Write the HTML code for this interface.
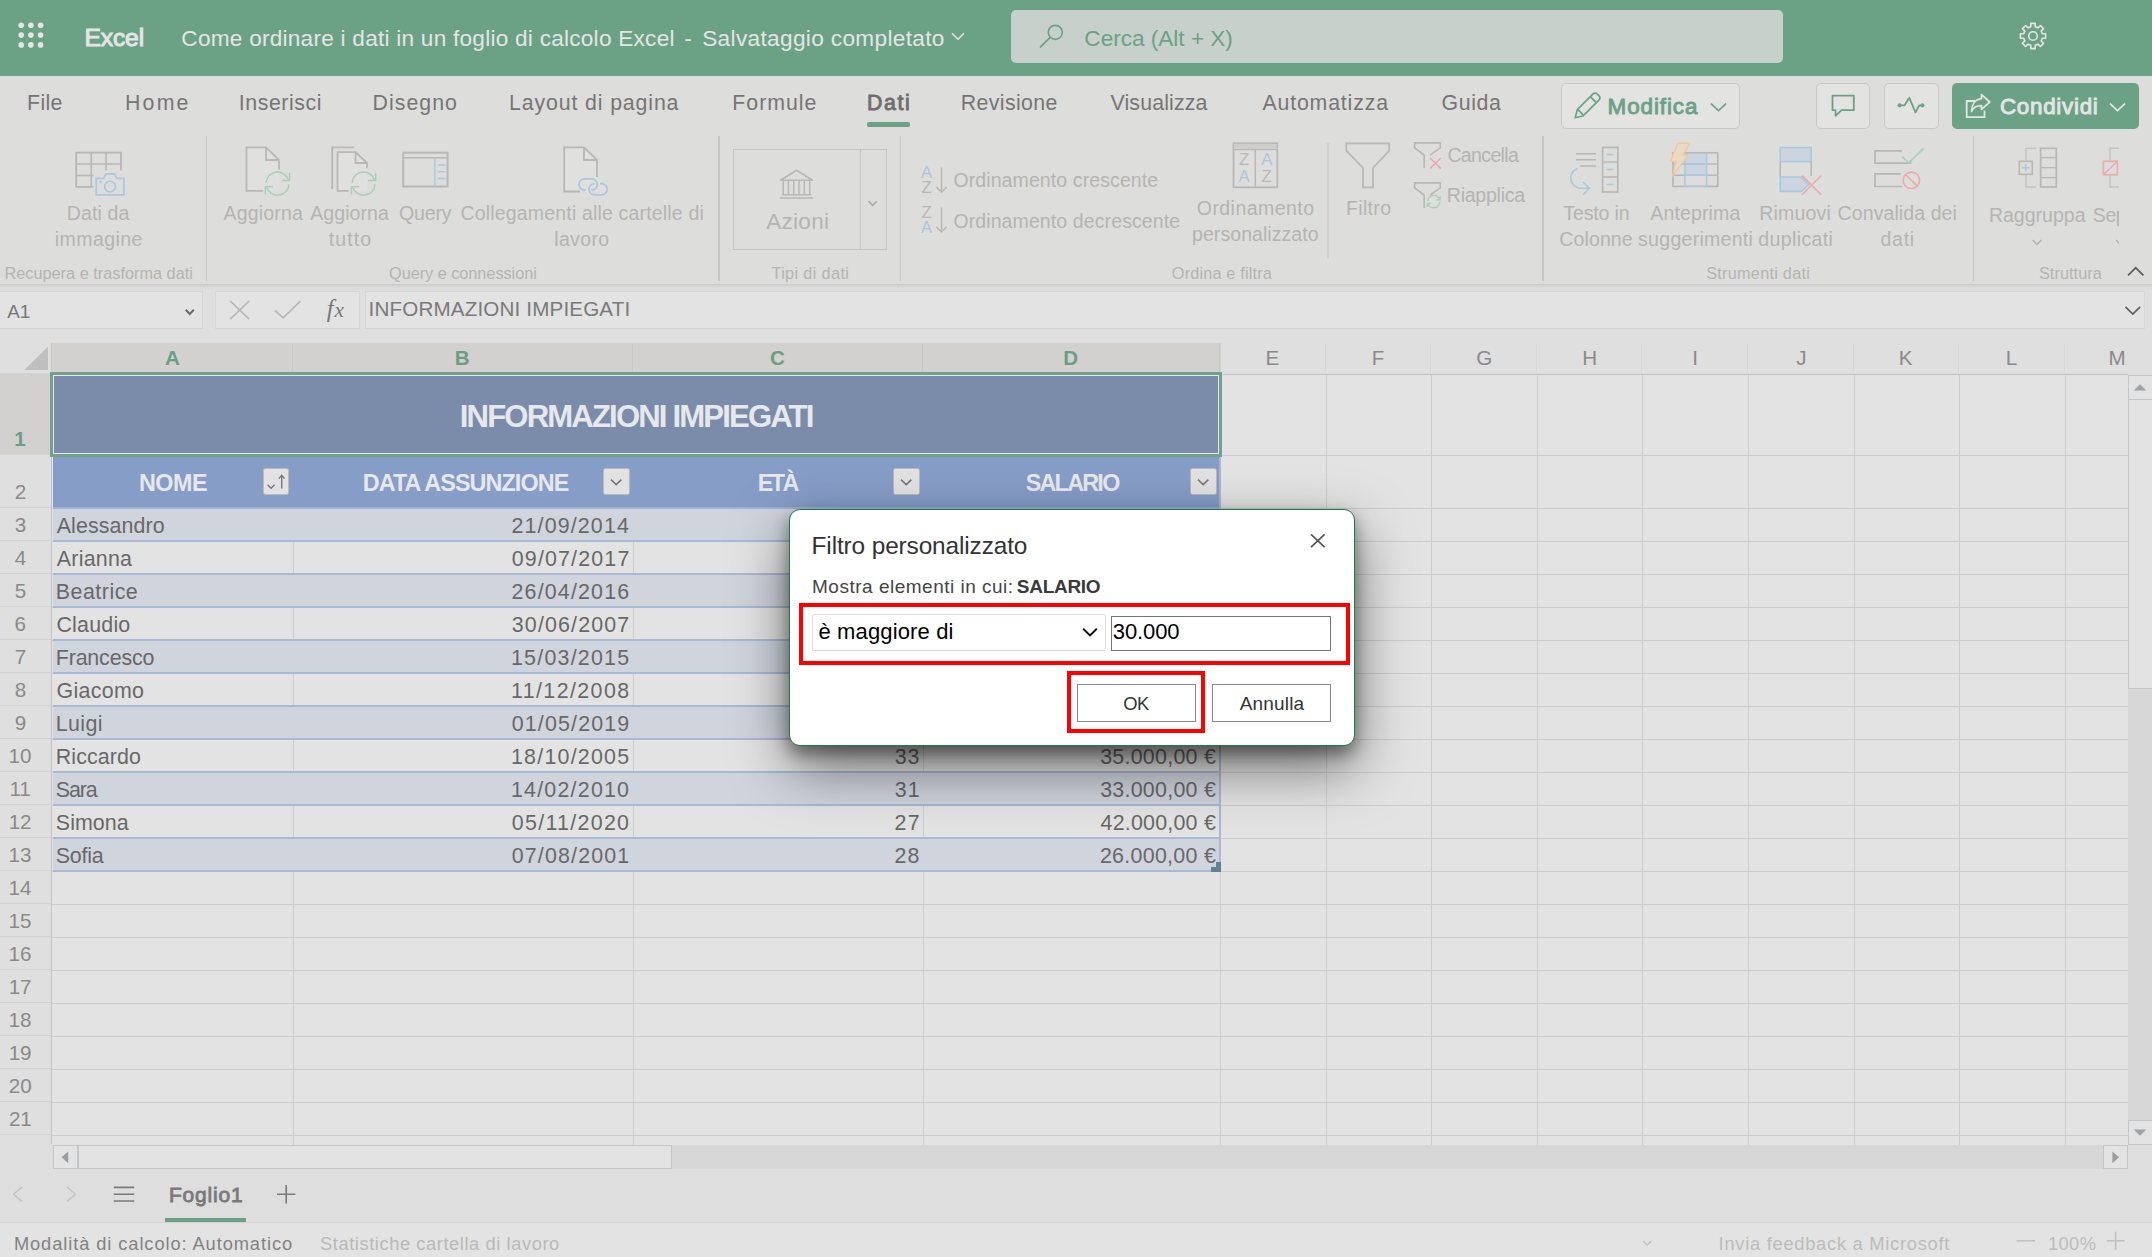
<!DOCTYPE html>
<html lang="it"><head><meta charset="utf-8"><title>Excel</title>
<style>
html,body{margin:0;padding:0;background:#dddddb;}
body{width:2152px;height:1257px;position:relative;overflow:hidden;font-family:"Liberation Sans",sans-serif;}
#base,#dlg{position:absolute;left:0;top:0;width:2152px;height:1257px;overflow:hidden;}
#base>div,#base>span,#dlg>div,#dlg>span{position:absolute;box-sizing:border-box;}
span{white-space:pre;font-kerning:none;font-variant-ligatures:none;}
svg{position:absolute;left:0;top:0;}
</style></head><body>
<div id="base">
<div style="left:0px;top:0px;width:2152px;height:75.5px;background:#6ba286;"></div>
<div style="left:1011px;top:10px;width:772px;height:52.5px;background:#c7d0ca;border-radius:5px;"></div>
<div style="left:0px;top:75.5px;width:2152px;height:209px;background:#dddddb;"></div>
<div style="left:867px;top:122.2px;width:43px;height:4.6px;background:#6ba286;border-radius:2px;"></div>
<div style="left:1560.5px;top:83.3px;width:179.2px;height:45.3px;background:#e3e3e2;border:1.3px solid #c9c8c7;border-radius:5px;"></div>
<div style="left:1816.4px;top:83.3px;width:54.1px;height:45.3px;background:#e3e3e2;border:1.3px solid #c9c8c7;border-radius:5px;"></div>
<div style="left:1884.1px;top:83.3px;width:54.6px;height:45.3px;background:#e3e3e2;border:1.3px solid #c9c8c7;border-radius:5px;"></div>
<div style="left:1952.1px;top:83.3px;width:186.9px;height:45.3px;background:#6ba286;border-radius:5px;"></div>
<div style="left:205.6px;top:136px;width:1.8px;height:144.5px;background:#c6c5c4;"></div>
<div style="left:718.1px;top:136px;width:1.8px;height:144.5px;background:#c6c5c4;"></div>
<div style="left:899.6px;top:136px;width:1.8px;height:144.5px;background:#c6c5c4;"></div>
<div style="left:1542.1px;top:136px;width:1.8px;height:144.5px;background:#c6c5c4;"></div>
<div style="left:1972.5px;top:136px;width:1.8px;height:144.5px;background:#c6c5c4;"></div>
<div style="left:1327.3px;top:142.5px;width:1.3px;height:115px;background:#d0cfce;"></div>

<div style="left:733.2px;top:149.3px;width:153.6px;height:101.2px;background:transparent;border:1.3px solid #c6c5c4;"></div>
<div style="left:860px;top:150px;width:1.2px;height:100px;background:#c6c5c4;"></div>
<div style="left:0px;top:283.8px;width:2152px;height:7px;background:linear-gradient(#c9c9c9,#dbdbdb 45%,#dfdfdf);"></div>
<div style="left:0px;top:290.5px;width:2152px;height:53px;background:#dfdfdf;"></div>
<div style="left:-2px;top:291px;width:205px;height:38px;background:#e3e3e3;border:1px solid #d5d6d8;"></div>
<div style="left:215px;top:291px;width:145px;height:38px;background:#e3e3e3;border:1px solid #d5d6d8;"></div>
<div style="left:365px;top:291px;width:1780px;height:38px;background:#e3e3e3;border:1px solid #d5d6d8;"></div>
<div style="left:0px;top:343px;width:2128px;height:802px;background:#e3e3e3;"></div>
<div style="left:0px;top:343px;width:2128px;height:31px;background:#dfdfdf;"></div>
<div style="left:52px;top:343px;width:1169px;height:31px;background:#d2d1cf;"></div>
<div style="left:0px;top:374px;width:51px;height:771px;background:#dfdfdf;"></div>
<div style="left:0px;top:373px;width:51px;height:82px;background:#d2d1cf;"></div>
<div style="left:52px;top:374px;width:2076px;height:1px;background:#c3c3c3;"></div>
<div style="left:51px;top:343px;width:1px;height:802px;background:#c4c4c4;"></div>
<div style="left:292px;top:344px;width:1px;height:30px;background:#c8c7c5;"></div>
<div style="left:632px;top:344px;width:1px;height:30px;background:#c8c7c5;"></div>
<div style="left:922px;top:344px;width:1px;height:30px;background:#c8c7c5;"></div>
<div style="left:1219px;top:344px;width:1px;height:30px;background:#c8c7c5;"></div>
<div style="left:1325px;top:344px;width:1px;height:30px;background:#d5d5d5;"></div>
<div style="left:1430px;top:344px;width:1px;height:30px;background:#d5d5d5;"></div>
<div style="left:1536px;top:344px;width:1px;height:30px;background:#d5d5d5;"></div>
<div style="left:1641px;top:344px;width:1px;height:30px;background:#d5d5d5;"></div>
<div style="left:1747px;top:344px;width:1px;height:30px;background:#d5d5d5;"></div>
<div style="left:1853px;top:344px;width:1px;height:30px;background:#d5d5d5;"></div>
<div style="left:1958px;top:344px;width:1px;height:30px;background:#d5d5d5;"></div>
<div style="left:2064px;top:344px;width:1px;height:30px;background:#d5d5d5;"></div>
<div style="left:0px;top:454px;width:51px;height:1px;background:#d2d2d2;"></div>
<div style="left:0px;top:507px;width:51px;height:1px;background:#d2d2d2;"></div>
<div style="left:0px;top:540px;width:51px;height:1px;background:#d2d2d2;"></div>
<div style="left:0px;top:573px;width:51px;height:1px;background:#d2d2d2;"></div>
<div style="left:0px;top:606px;width:51px;height:1px;background:#d2d2d2;"></div>
<div style="left:0px;top:639px;width:51px;height:1px;background:#d2d2d2;"></div>
<div style="left:0px;top:672px;width:51px;height:1px;background:#d2d2d2;"></div>
<div style="left:0px;top:705px;width:51px;height:1px;background:#d2d2d2;"></div>
<div style="left:0px;top:738px;width:51px;height:1px;background:#d2d2d2;"></div>
<div style="left:0px;top:771px;width:51px;height:1px;background:#d2d2d2;"></div>
<div style="left:0px;top:804px;width:51px;height:1px;background:#d2d2d2;"></div>
<div style="left:0px;top:837px;width:51px;height:1px;background:#d2d2d2;"></div>
<div style="left:0px;top:870px;width:51px;height:1px;background:#d2d2d2;"></div>
<div style="left:0px;top:903px;width:51px;height:1px;background:#d2d2d2;"></div>
<div style="left:0px;top:936px;width:51px;height:1px;background:#d2d2d2;"></div>
<div style="left:0px;top:969px;width:51px;height:1px;background:#d2d2d2;"></div>
<div style="left:0px;top:1002px;width:51px;height:1px;background:#d2d2d2;"></div>
<div style="left:0px;top:1035px;width:51px;height:1px;background:#d2d2d2;"></div>
<div style="left:0px;top:1068px;width:51px;height:1px;background:#d2d2d2;"></div>
<div style="left:0px;top:1101px;width:51px;height:1px;background:#d2d2d2;"></div>
<div style="left:0px;top:1134px;width:51px;height:1px;background:#d2d2d2;"></div>
<div style="left:0px;top:1167px;width:51px;height:1px;background:#d2d2d2;"></div>
<div style="left:293px;top:375px;width:1px;height:770px;background:#cdcdcd;"></div>
<div style="left:633px;top:375px;width:1px;height:770px;background:#cdcdcd;"></div>
<div style="left:923px;top:375px;width:1px;height:770px;background:#cdcdcd;"></div>
<div style="left:1220px;top:375px;width:1px;height:770px;background:#cdcdcd;"></div>
<div style="left:1326px;top:375px;width:1px;height:770px;background:#cdcdcd;"></div>
<div style="left:1431px;top:375px;width:1px;height:770px;background:#cdcdcd;"></div>
<div style="left:1537px;top:375px;width:1px;height:770px;background:#cdcdcd;"></div>
<div style="left:1642px;top:375px;width:1px;height:770px;background:#cdcdcd;"></div>
<div style="left:1748px;top:375px;width:1px;height:770px;background:#cdcdcd;"></div>
<div style="left:1854px;top:375px;width:1px;height:770px;background:#cdcdcd;"></div>
<div style="left:1959px;top:375px;width:1px;height:770px;background:#cdcdcd;"></div>
<div style="left:2065px;top:375px;width:1px;height:770px;background:#cdcdcd;"></div>
<div style="left:52px;top:455px;width:2076px;height:1px;background:#cdcdcd;"></div>
<div style="left:52px;top:508px;width:2076px;height:1px;background:#cdcdcd;"></div>
<div style="left:52px;top:541px;width:2076px;height:1px;background:#cdcdcd;"></div>
<div style="left:52px;top:574px;width:2076px;height:1px;background:#cdcdcd;"></div>
<div style="left:52px;top:607px;width:2076px;height:1px;background:#cdcdcd;"></div>
<div style="left:52px;top:640px;width:2076px;height:1px;background:#cdcdcd;"></div>
<div style="left:52px;top:673px;width:2076px;height:1px;background:#cdcdcd;"></div>
<div style="left:52px;top:706px;width:2076px;height:1px;background:#cdcdcd;"></div>
<div style="left:52px;top:739px;width:2076px;height:1px;background:#cdcdcd;"></div>
<div style="left:52px;top:772px;width:2076px;height:1px;background:#cdcdcd;"></div>
<div style="left:52px;top:805px;width:2076px;height:1px;background:#cdcdcd;"></div>
<div style="left:52px;top:838px;width:2076px;height:1px;background:#cdcdcd;"></div>
<div style="left:52px;top:871px;width:2076px;height:1px;background:#cdcdcd;"></div>
<div style="left:52px;top:904px;width:2076px;height:1px;background:#cdcdcd;"></div>
<div style="left:52px;top:937px;width:2076px;height:1px;background:#cdcdcd;"></div>
<div style="left:52px;top:970px;width:2076px;height:1px;background:#cdcdcd;"></div>
<div style="left:52px;top:1003px;width:2076px;height:1px;background:#cdcdcd;"></div>
<div style="left:52px;top:1036px;width:2076px;height:1px;background:#cdcdcd;"></div>
<div style="left:52px;top:1069px;width:2076px;height:1px;background:#cdcdcd;"></div>
<div style="left:52px;top:1102px;width:2076px;height:1px;background:#cdcdcd;"></div>
<div style="left:52px;top:1135px;width:2076px;height:1px;background:#cdcdcd;"></div>
<div style="left:52px;top:1168px;width:2076px;height:1px;background:#cdcdcd;"></div>
<div style="left:53px;top:375.3px;width:1166.8px;height:78px;background:#7b8cab;"></div>
<div style="left:53px;top:457px;width:1166px;height:50.5px;background:#869dc8;"></div>
<div style="left:1219px;top:457px;width:2px;height:50.5px;background:#a9b7d4;"></div>
<div style="left:262.8px;top:468.3px;width:26.6px;height:26.8px;background:#e2e2e2;border:1.2px solid #b9b9b9;border-radius:2.5px;"></div>
<div style="left:603px;top:468.3px;width:26.6px;height:26.8px;background:#e2e2e2;border:1.2px solid #b9b9b9;border-radius:2.5px;"></div>
<div style="left:893px;top:468.3px;width:26.6px;height:26.8px;background:#e2e2e2;border:1.2px solid #b9b9b9;border-radius:2.5px;"></div>
<div style="left:1190px;top:468.3px;width:26.6px;height:26.8px;background:#e2e2e2;border:1.2px solid #b9b9b9;border-radius:2.5px;"></div>
<div style="left:53px;top:506.6px;width:1167.3px;height:2.2px;background:#9fb2d8;"></div>
<div style="left:53px;top:508.6px;width:1167.3px;height:31.5px;background:#d0d4dd;"></div>
<div style="left:53px;top:540px;width:1167.3px;height:2px;background:#a9b8d4;"></div>
<div style="left:53px;top:573px;width:1167.3px;height:2px;background:#a9b8d4;"></div>
<div style="left:53px;top:574.6px;width:1167.3px;height:31.5px;background:#d0d4dd;"></div>
<div style="left:53px;top:606px;width:1167.3px;height:2px;background:#a9b8d4;"></div>
<div style="left:53px;top:639px;width:1167.3px;height:2px;background:#a9b8d4;"></div>
<div style="left:53px;top:640.6px;width:1167.3px;height:31.5px;background:#d0d4dd;"></div>
<div style="left:53px;top:672px;width:1167.3px;height:2px;background:#a9b8d4;"></div>
<div style="left:53px;top:705px;width:1167.3px;height:2px;background:#a9b8d4;"></div>
<div style="left:53px;top:706.6px;width:1167.3px;height:31.5px;background:#d0d4dd;"></div>
<div style="left:53px;top:738px;width:1167.3px;height:2px;background:#a9b8d4;"></div>
<div style="left:53px;top:771px;width:1167.3px;height:2px;background:#a9b8d4;"></div>
<div style="left:53px;top:772.6px;width:1167.3px;height:31.5px;background:#d0d4dd;"></div>
<div style="left:53px;top:804px;width:1167.3px;height:2px;background:#a9b8d4;"></div>
<div style="left:53px;top:837px;width:1167.3px;height:2px;background:#a9b8d4;"></div>
<div style="left:53px;top:838.6px;width:1167.3px;height:31.5px;background:#d0d4dd;"></div>
<div style="left:53px;top:870px;width:1167.3px;height:2px;background:#a9b8d4;"></div>
<div style="left:1219px;top:507px;width:2px;height:365px;background:#a9b8d4;"></div>
<div style="left:50px;top:372px;width:1172px;height:85px;background:transparent;border:3px solid #72a088;"></div>
<div style="left:53px;top:375px;width:1166px;height:79px;background:transparent;border:1px solid #e2e6e4;"></div>
<div style="left:2128px;top:343.5px;width:24px;height:801.5px;background:#dfdfdf;"></div>
<div style="left:2128px;top:375px;width:24px;height:770px;background:#d7d7d7;"></div>
<div style="left:2128px;top:375px;width:25px;height:25px;background:#e3e3e3;border:1px solid #c3c5c8;"></div>
<div style="left:2128px;top:399px;width:25px;height:289.5px;background:#e3e3e3;border:1px solid #c3c5c8;"></div>
<div style="left:2128px;top:1120px;width:25px;height:25px;background:#e3e3e3;border:1px solid #c3c5c8;"></div>
<div style="left:0px;top:1144px;width:53px;height:1px;background:#dedede;"></div>
<div style="left:0px;top:1145px;width:2152px;height:78px;background:#dedede;"></div>
<div style="left:53px;top:1145px;width:2075px;height:24px;background:#d7d7d7;"></div>
<div style="left:53px;top:1145px;width:25px;height:24px;background:#e3e3e3;border:1px solid #c3c5c8;"></div>
<div style="left:77.5px;top:1145px;width:594.5px;height:24px;background:#e3e3e3;border:1px solid #c3c5c8;"></div>
<div style="left:2103px;top:1145px;width:25px;height:24px;background:#e3e3e3;border:1px solid #c3c5c8;"></div>
<div style="left:165.2px;top:1218px;width:80.8px;height:4px;background:#6ea087;"></div>
<div style="left:0px;top:1222px;width:2152px;height:35px;background:#e3e3e3;border-top:1px solid #d2d2d2;"></div>
<svg width="2152" height="1257" viewBox="0 0 2152 1257" fill="none" stroke-linecap="butt" stroke-linejoin="miter">
<defs><clipPath id="clipsep"><rect x="2080" y="130" width="39" height="130"/></clipPath></defs>
<circle cx="21.2" cy="25.3" r="2.8" stroke="none" fill="#e4e5e4" stroke-width="1.65"/>
<circle cx="21.2" cy="35.1" r="2.8" stroke="none" fill="#e4e5e4" stroke-width="1.65"/>
<circle cx="21.2" cy="44.9" r="2.8" stroke="none" fill="#e4e5e4" stroke-width="1.65"/>
<circle cx="30.9" cy="25.3" r="2.8" stroke="none" fill="#e4e5e4" stroke-width="1.65"/>
<circle cx="30.9" cy="35.1" r="2.8" stroke="none" fill="#e4e5e4" stroke-width="1.65"/>
<circle cx="30.9" cy="44.9" r="2.8" stroke="none" fill="#e4e5e4" stroke-width="1.65"/>
<circle cx="40.6" cy="25.3" r="2.8" stroke="none" fill="#e4e5e4" stroke-width="1.65"/>
<circle cx="40.6" cy="35.1" r="2.8" stroke="none" fill="#e4e5e4" stroke-width="1.65"/>
<circle cx="40.6" cy="44.9" r="2.8" stroke="none" fill="#e4e5e4" stroke-width="1.65"/>
<path d="M952,33.2 L958,39.2 L964,33.2" stroke="#e4e5e4" fill="none" stroke-width="1.5" />
<circle cx="1055.3" cy="32.3" r="7" stroke="#6ba286" fill="none" stroke-width="1.7"/>
<path d="M1050.3,37.3 L1040,47.4" stroke="#6ba286" fill="none" stroke-width="1.7" />
<path d="M2030.8,23.4 L2035.2,23.4 L2035.2,26.7 L2038.0,27.8 L2040.4,25.5 L2043.5,28.6 L2041.2,31.0 L2042.3,33.8 L2045.6,33.8 L2045.6,38.2 L2042.3,38.2 L2041.2,41.0 L2043.5,43.4 L2040.4,46.5 L2038.0,44.2 L2035.2,45.3 L2035.2,48.6 L2030.8,48.6 L2030.8,45.3 L2028.0,44.2 L2025.6,46.5 L2022.5,43.4 L2024.8,41.0 L2023.7,38.2 L2020.4,38.2 L2020.4,33.8 L2023.7,33.8 L2024.8,31.0 L2022.5,28.6 L2025.6,25.5 L2028.0,27.8 L2030.8,26.7 Z" stroke="#e4e5e4" fill="none" stroke-width="1.6" stroke-linejoin="round"/>
<circle cx="2033" cy="36" r="4.3" stroke="#e4e5e4" fill="none" stroke-width="1.6"/>
<path d="M1575.2,117.8 L1577.3,109.6 L1592.8,94.1 A3.2,3.2 0 0 1 1597.4,94.1 L1598.9,95.6 A3.2,3.2 0 0 1 1598.9,100.2 L1583.4,115.7 Z M1577.6,109.3 L1583.7,115.4 M1590.3,96.6 L1596.4,102.7" stroke="#6ba286" fill="none" stroke-width="1.7" stroke-linejoin="round"/>
<path d="M1711,103.6 L1718.5,110.6 L1726,103.6" stroke="#6ba286" fill="none" stroke-width="1.7" />
<path d="M1832.5,95.6 H1853.8 V110.2 H1841.5 L1835.5,115.8 V110.2 H1832.5 Z" stroke="#6ba286" fill="none" stroke-width="1.8" stroke-linejoin="round"/>
<path d="M1900.5,105.3 H1904.5 L1909.3,97.8 L1915.5,112.3 L1919.3,105.3 H1921.5" stroke="#6ba286" fill="none" stroke-width="1.8" stroke-linejoin="round"/>
<circle cx="1899.6" cy="105.3" r="2.1" stroke="none" fill="#6ba286" stroke-width="1.65"/>
<circle cx="1922.4" cy="105.3" r="2.1" stroke="none" fill="#6ba286" stroke-width="1.65"/>
<path d="M1975,101 H1966.7 V117.2 H1984.5 V110.5" stroke="#e4e5e4" fill="none" stroke-width="1.8" />
<path d="M1981.5,94.6 L1989.8,102 L1981.5,109.4 V105.6 C1976.5,105.4 1973.5,107.3 1971.5,111.5 C1971.6,104.5 1975,99.2 1981.5,98.6 Z" stroke="#e4e5e4" fill="none" stroke-width="1.7" stroke-linejoin="round"/>
<path d="M2110,103.6 L2117.5,110.6 L2125,103.6" stroke="#e4e5e4" fill="none" stroke-width="1.7" />
<rect x="76.2" y="152.6" width="44.7" height="34.3" rx="0" stroke="#b9b8b7" fill="none" stroke-width="1.8"/>
<path d="M91.2,152.6 V186.9 M106,152.6 V186.9 M76.2,164 H120.9 M76.2,175.5 H120.9" stroke="#b9b8b7" fill="none" stroke-width="1.6" />
<rect x="93.3" y="170.5" width="33" height="27" rx="0" stroke="none" fill="#dddddb" stroke-width="1.65"/>
<path d="M96.2,178.3 H103.6 L105.6,173.9 H114.6 L116.6,178.3 H123.9 V194.9 H96.2 Z" stroke="#acc8dc" fill="none" stroke-width="1.7" />
<circle cx="110" cy="186.6" r="5.4" stroke="#acc8dc" fill="none" stroke-width="1.6"/>
<rect x="99.3" y="180.8" width="2.2" height="2.2" rx="0" stroke="none" fill="#acc8dc" stroke-width="1.65"/>
<path d="M279,176 V160 L266,147.3 H246.5 V190.8 H279 Z" stroke="none" fill="#e0e0df" stroke-width="1.65" />
<path d="M279,169.4 V160 L266,147.3 H246.5 V190.8 H263.2 M266,147.3 V160 H279" stroke="#b9b8b7" fill="none" stroke-width="1.8" />
<path d="M266.0,182.6 A11.5,11.5 0 0 1 288.4,179.9" stroke="#a8d0b8" fill="none" stroke-width="1.5" />
<path d="M289.6,173.0 L289.6,180.4 L282.0,180.4" stroke="#a8d0b8" fill="none" stroke-width="1.5" />
<path d="M289.0,184.4 A11.5,11.5 0 0 1 266.6,187.3" stroke="#a8d0b8" fill="none" stroke-width="1.5" />
<path d="M265.3,194.2 L265.3,186.8 L273.0,186.8" stroke="#a8d0b8" fill="none" stroke-width="1.5" />
<path d="M332.2,189 V147.4 H354.2" stroke="#b9b8b7" fill="none" stroke-width="1.8" />
<path d="M367,176 V163 L355.6,152.2 H337.5 V190.8 H367 Z" stroke="none" fill="#e0e0df" stroke-width="1.65" />
<path d="M367,168.3 V163 L355.6,152.2 H337.5 V190.8 H348.6 M355.6,152.2 V163 H367" stroke="#b9b8b7" fill="none" stroke-width="1.8" />
<path d="M352.1,182.6 A11.5,11.5 0 0 1 374.5,179.9" stroke="#a8d0b8" fill="none" stroke-width="1.5" />
<path d="M375.7,173.0 L375.7,180.4 L368.1,180.4" stroke="#a8d0b8" fill="none" stroke-width="1.5" />
<path d="M375.1,184.4 A11.5,11.5 0 0 1 352.7,187.3" stroke="#a8d0b8" fill="none" stroke-width="1.5" />
<path d="M351.4,194.2 L351.4,186.8 L359.1,186.8" stroke="#a8d0b8" fill="none" stroke-width="1.5" />
<rect x="403.2" y="152.7" width="44.3" height="33.8" rx="0" stroke="#b9b8b7" fill="none" stroke-width="2"/>
<path d="M403.2,157.8 H447.5" stroke="#b9b8b7" fill="none" stroke-width="1.6" />
<path d="M434.9,158.5 V185.5 M438,165.1 H445.4 M438,171.7 H445.4 M438,178.4 H445.4" stroke="#acc8dc" fill="none" stroke-width="1.5" />
<path d="M597,177 V160 L584,147 H564 V191 H597 Z" stroke="none" fill="#e0e0df" stroke-width="1.65" />
<path d="M597,177 V160 L584,147.3 H564.2 V191.5 H580 M584,147.3 V160 H597" stroke="#b9b8b7" fill="none" stroke-width="1.8" />
<path d="M586,189.9 H584.5 A5.5,5.5 0 0 1 584.5,178.9 H591.7 A5.5,5.5 0 0 1 591.7,189.9 H591.2" stroke="#acc8dc" fill="none" stroke-width="1.7" />
<path d="M600.1,183.7 H601.6 A5.6,5.6 0 0 1 601.6,194.9 H594.6 A5.6,5.6 0 0 1 594.6,183.7 H595" stroke="#acc8dc" fill="none" stroke-width="1.7" />
<path d="M780.5,180.2 L796.5,170.2 L812.6,180.2 Z" stroke="#b9b8b7" fill="none" stroke-width="1.6" stroke-linejoin="round"/>
<path d="M783.2,181 V194.7 M788.4,181 V194.7 M793.7,181 V194.7 M799,181 V194.7 M804.3,181 V194.7 M809.7,181 V194.7 M781.8,194.7 H811.2 M779.8,198 H813.3" stroke="#b9b8b7" fill="none" stroke-width="1.5" />
<path d="M868.4,201.2 L872.6,205.4 L876.8,201.2" stroke="#aaa9a8" fill="none" stroke-width="1.6" />
<path d="M941.5,167.6 V192.0 M936.3,187.0 L941.5,192.2 L946.7,187.0" stroke="#b9b8b7" fill="none" stroke-width="1.5" />
<path d="M941.5,207.4 V231.8 M936.3,226.8 L941.5,232.0 L946.7,226.8" stroke="#b9b8b7" fill="none" stroke-width="1.5" />
<rect x="1233.5" y="143.4" width="43.8" height="43.9" rx="0" stroke="#b9b8b7" fill="none" stroke-width="1.8"/>
<rect x="1233.5" y="143.4" width="43.8" height="6.2" rx="0" stroke="#b9b8b7" fill="#cfcecd" stroke-width="1.2"/>
<path d="M1255.3,149.6 V187.3" stroke="#b9b8b7" fill="none" stroke-width="1.5" />
<path d="M1346.3,143.4 H1389.2 V150.6 L1373,168 V187.4 H1363 V168 L1346.3,150.6 Z" stroke="#b9b8b7" fill="none" stroke-width="1.8" />
<path d="M1430,155.2 L1440.3,147.8 V142.9 H1414.6 V147.8 L1424.2,155.2 V168" stroke="#b9b8b7" fill="none" stroke-width="1.6" />
<path d="M1430.2,158 L1440.8,168.6 M1440.8,158 L1430.2,168.6" stroke="#eaabab" fill="none" stroke-width="1.5" />
<path d="M1430,195.2 L1440.3,187.8 V182.9 H1414.6 V187.8 L1424.2,195.2 V208" stroke="#b9b8b7" fill="none" stroke-width="1.6" />
<path d="M1427.8,201.1 A6,6 0 0 1 1439.5,199.6" stroke="#a8d0b8" fill="none" stroke-width="1.3" />
<path d="M1440.1,196.1 L1440.1,199.9 L1436.1,199.9" stroke="#a8d0b8" fill="none" stroke-width="1.3" />
<path d="M1439.8,202.0 A6,6 0 0 1 1428.1,203.6" stroke="#a8d0b8" fill="none" stroke-width="1.3" />
<path d="M1427.4,207.1 L1427.4,203.3 L1431.5,203.3" stroke="#a8d0b8" fill="none" stroke-width="1.3" />
<path d="M1576,153.8 H1596 M1576,159.8 H1596 M1580,166 H1596" stroke="#b9b8b7" fill="none" stroke-width="1.6" />
<path d="M1577.5,168.5 C1568,173 1568.5,184.5 1579,188.3 L1589,188.3 M1583,182 L1589.6,188.3 L1583,194.6" stroke="#acc8dc" fill="none" stroke-width="1.6" />
<rect x="1602.6" y="147.4" width="15.2" height="44.6" rx="0" stroke="#b9b8b7" fill="none" stroke-width="1.7"/>
<path d="M1602.6,162 H1617.8 M1602.6,177 H1617.8" stroke="#b9b8b7" fill="none" stroke-width="1.5" />
<path d="M1606.5,154.5 H1613.5 M1606.5,169.5 H1613.5 M1606.5,184.5 H1613.5" stroke="#acc8dc" fill="none" stroke-width="1.5" />
<path d="M1685,153 H1706.6 V175.2 H1685 Z" stroke="none" fill="#c9d6e0" stroke-width="1.65" />
<rect x="1673" y="152.8" width="44.8" height="33.6" rx="0" stroke="#b9b8b7" fill="none" stroke-width="1.7"/>
<path d="M1673,164 H1717.8 M1673,175.2 H1717.8" stroke="#b9b8b7" fill="none" stroke-width="1.4" />
<path d="M1684.9,152.8 V186.4 M1706.6,152.8 V186.4" stroke="#acc8dc" fill="none" stroke-width="1.5" />
<path d="M1685,164 H1706.6 M1685,175.2 H1706.6 M1685,186.4 H1706.6" stroke="#acc8dc" fill="none" stroke-width="1.4" />
<path d="M1677.8,143.3 H1689.6 L1683,155 H1688.6 L1672.4,176 L1676.2,161.4 H1670.4 Z" stroke="#ecc9a2" fill="#ead9c4" stroke-width="1.4" stroke-linejoin="round"/>
<rect x="1780.2" y="147.6" width="31" height="14" rx="0" stroke="#acc8dc" fill="#c9d6e0" stroke-width="1.6"/>
<path d="M1780.2,161.6 V177 M1811.2,161.6 V176" stroke="#b9b8b7" fill="none" stroke-width="1.6" />
<path d="M1780.2,177 H1801 L1808.5,184.5 L1801.5,191.4 H1780.2 Z" stroke="#acc8dc" fill="#c9d6e0" stroke-width="1.6" />
<path d="M1802,175.6 L1821.2,194.8 M1821.2,175.6 L1802,194.8" stroke="#eaabab" fill="none" stroke-width="1.6" />
<path d="M1902,150.8 H1875 V163.2 H1910.5 V160" stroke="#b9b8b7" fill="none" stroke-width="1.7" />
<path d="M1901,173.9 H1875 V186.5 H1902" stroke="#b9b8b7" fill="none" stroke-width="1.7" />
<path d="M1902.2,156.6 L1908.8,163 L1923.6,148.4" stroke="#a8d0b8" fill="none" stroke-width="1.6" />
<circle cx="1911.4" cy="180.3" r="8.2" stroke="#eaabab" fill="none" stroke-width="1.6"/>
<path d="M1905.6,174.5 L1917.2,186.1" stroke="#eaabab" fill="none" stroke-width="1.6" />
<path d="M2036,148.3 H2026 V160 M2026,175 V186.9 H2036" stroke="#c4c3c2" fill="none" stroke-width="1.5" />
<rect x="2019.3" y="161.3" width="13" height="13" rx="0" stroke="#b9b8b7" fill="none" stroke-width="1.7"/>
<path d="M2022,167.8 H2029.6 M2025.8,164 V171.6" stroke="#acc8dc" fill="none" stroke-width="1.5" />
<rect x="2040.6" y="148.3" width="15.7" height="38.7" rx="0" stroke="#b9b8b7" fill="none" stroke-width="1.7"/>
<path d="M2040.6,157.6 H2056.3 M2040.6,167.6 H2056.3 M2040.6,177.6 H2056.3" stroke="#b9b8b7" fill="none" stroke-width="1.4" />
<path d="M2032.6,240 L2037,244.4 L2041.4,240" stroke="#b5b4b3" fill="none" stroke-width="1.5" />
<g clip-path="url(#clipsep)">
<path d="M2119,148.3 H2110 V160 M2110,175 V186.9 H2119" stroke="#c4c3c2" fill="none" stroke-width="1.5" />
<rect x="2103.4" y="161.3" width="14" height="13.4" rx="0" stroke="#eaabab" fill="none" stroke-width="1.7"/>
<path d="M2103.4,174.7 L2117.4,161.3" stroke="#eaabab" fill="none" stroke-width="1.5" />
<path d="M2116,240 L2120,244" stroke="#b5b4b3" fill="none" stroke-width="1.5" />
</g>
<path d="M2128,275.3 L2135.7,267.8 L2143.4,275.3" stroke="#5f5f5f" fill="none" stroke-width="1.7" />
<path d="M185.8,309.8 L189.8,314 L193.8,309.8" stroke="#6a6a6a" fill="none" stroke-width="2" />
<path d="M230.2,301 L249.2,319.2 M249.2,301 L230.2,319.2" stroke="#b9b9b9" fill="none" stroke-width="1.7" />
<path d="M275,310.5 L283.2,317.8 L300.4,301.2" stroke="#b9b9b9" fill="none" stroke-width="1.7" />
<path d="M2125.5,306.8 L2132.8,314 L2140.1,306.8" stroke="#5f5f5f" fill="none" stroke-width="1.7" />
<path d="M48,346.8 V370 H24.4 Z" stroke="none" fill="#bfbfbf" stroke-width="1.65" />
<path d="M611,479.6 L616.2,484.6 L621.4,479.6" stroke="#777" fill="none" stroke-width="1.5" />
<path d="M901,479.6 L906.2,484.6 L911.4,479.6" stroke="#777" fill="none" stroke-width="1.5" />
<path d="M1198,479.6 L1203.2,484.6 L1208.4,479.6" stroke="#777" fill="none" stroke-width="1.5" />
<path d="M267.6,484.8 L271.1,488.3 L274.6,484.8" stroke="#777" fill="none" stroke-width="1.4" />
<path d="M281.7,488.4 V475.2 M278.9,478.6 L281.7,475.4 L284.5,478.6" stroke="#777" fill="none" stroke-width="1.4" />
<path d="M1216,862 H1221 V872 H1211 V867 H1216 Z" stroke="none" fill="#628094" stroke-width="1.65" />
<path d="M2133.6,390.6 L2140,384.2 L2146.4,390.6 Z" stroke="none" fill="#a0a2a3" stroke-width="1.65" />
<path d="M2133.6,1129.4 L2140,1135.8 L2146.4,1129.4 Z" stroke="none" fill="#a0a2a3" stroke-width="1.65" />
<path d="M68.2,1151.4 L61.6,1157.3 L68.2,1163.2 Z" stroke="none" fill="#9b9d9e" stroke-width="1.65" />
<path d="M2112.4,1151.4 L2119,1157.3 L2112.4,1163.2 Z" stroke="none" fill="#9b9d9e" stroke-width="1.65" />
<path d="M22,1187 L13.6,1194.2 L22,1201.4" stroke="#c3c3c3" fill="none" stroke-width="1.5" />
<path d="M67,1187 L75.4,1194.2 L67,1201.4" stroke="#c3c3c3" fill="none" stroke-width="1.5" />
<path d="M113.8,1187.4 H134.2 M113.8,1194.2 H134.2 M113.8,1201 H134.2" stroke="#7a7a7a" fill="none" stroke-width="1.6" />
<path d="M277,1194.2 H295.4 M286.2,1185 V1203.4" stroke="#7a7a7a" fill="none" stroke-width="1.6" />
<path d="M1643.2,1241 L1647.2,1245 L1651.2,1241" stroke="#c4c4c4" fill="none" stroke-width="1.5" />
<path d="M2016.5,1240.8 H2035" stroke="#c0c0c0" fill="none" stroke-width="1.5" />
<path d="M2106.6,1240.8 H2124.6 M2115.6,1231.8 V1249.8" stroke="#c0c0c0" fill="none" stroke-width="1.5" />
</svg>
<span style="left:84.47px;top:25.98px;font:400 24.6px/1 'Liberation Sans',sans-serif;letter-spacing:-0.120px;color:#e4e5e4;-webkit-text-stroke:0.98px #e4e5e4;">Excel</span>
<span style="left:181.37px;top:27.67px;font:400 22.6px/1 'Liberation Sans',sans-serif;letter-spacing:0.247px;color:#e4e5e4;">Come ordinare i dati in un foglio di calcolo Excel</span>
<span style="left:684.21px;top:27.67px;font:400 22.6px/1 'Liberation Sans',sans-serif;color:#e4e5e4;">-</span>
<span style="left:702.18px;top:27.67px;font:400 22.6px/1 'Liberation Sans',sans-serif;letter-spacing:0.351px;color:#e4e5e4;">Salvataggio completato</span>
<span style="left:1084.37px;top:27.57px;font:400 22.6px/1 'Liberation Sans',sans-serif;letter-spacing:-0.018px;color:#6ba286;">Cerca (Alt + X)</span>
<span style="left:27.05px;top:92.97px;font:400 21.3px/1 'Liberation Sans',sans-serif;letter-spacing:0.353px;color:#777574;">File</span>
<span style="left:125.05px;top:92.97px;font:400 21.3px/1 'Liberation Sans',sans-serif;letter-spacing:2.192px;color:#777574;">Home</span>
<span style="left:238.84px;top:92.97px;font:400 21.3px/1 'Liberation Sans',sans-serif;letter-spacing:0.560px;color:#777574;">Inserisci</span>
<span style="left:372.55px;top:92.97px;font:400 21.3px/1 'Liberation Sans',sans-serif;letter-spacing:1.030px;color:#777574;">Disegno</span>
<span style="left:509.05px;top:92.97px;font:400 21.3px/1 'Liberation Sans',sans-serif;letter-spacing:0.874px;color:#777574;">Layout di pagina</span>
<span style="left:732.25px;top:92.97px;font:400 21.3px/1 'Liberation Sans',sans-serif;letter-spacing:1.013px;color:#777574;">Formule</span>
<span style="left:960.75px;top:92.97px;font:400 21.3px/1 'Liberation Sans',sans-serif;letter-spacing:0.394px;color:#777574;">Revisione</span>
<span style="left:1110.41px;top:92.97px;font:400 21.3px/1 'Liberation Sans',sans-serif;letter-spacing:0.174px;color:#777574;">Visualizza</span>
<span style="left:1262.46px;top:92.97px;font:400 21.3px/1 'Liberation Sans',sans-serif;letter-spacing:0.834px;color:#777574;">Automatizza</span>
<span style="left:1441.43px;top:92.97px;font:400 21.3px/1 'Liberation Sans',sans-serif;letter-spacing:0.676px;color:#777574;">Guida</span>
<span style="left:866.88px;top:92.97px;font:400 21.3px/1 'Liberation Sans',sans-serif;letter-spacing:1.683px;color:#6f6d6c;-webkit-text-stroke:0.85px #6f6d6c;">Dati</span>
<span style="left:1607.61px;top:95.64px;font:400 22.4px/1 'Liberation Sans',sans-serif;letter-spacing:0.907px;color:#6ba286;-webkit-text-stroke:0.90px #6ba286;">Modifica</span>
<span style="left:1999.93px;top:95.64px;font:400 22.4px/1 'Liberation Sans',sans-serif;letter-spacing:0.727px;color:#e4e5e4;-webkit-text-stroke:0.90px #e4e5e4;">Condividi</span>
<span style="left:66.70px;top:203.99px;font:400 19.5px/1 'Liberation Sans',sans-serif;letter-spacing:0.131px;color:#b5b4b3;">Dati da</span>
<span style="left:54.71px;top:230.19px;font:400 19.5px/1 'Liberation Sans',sans-serif;letter-spacing:0.457px;color:#b5b4b3;">immagine</span>
<span style="left:4.46px;top:264.80px;font:400 16.3px/1 'Liberation Sans',sans-serif;letter-spacing:0.008px;color:#b5b4b3;">Recupera e trasforma dati</span>
<span style="left:223.56px;top:203.99px;font:400 19.5px/1 'Liberation Sans',sans-serif;letter-spacing:0.166px;color:#b5b4b3;">Aggiorna</span>
<span style="left:310.26px;top:203.99px;font:400 19.5px/1 'Liberation Sans',sans-serif;letter-spacing:0.066px;color:#b5b4b3;">Aggiorna</span>
<span style="left:328.71px;top:230.19px;font:400 19.5px/1 'Liberation Sans',sans-serif;letter-spacing:1.085px;color:#b5b4b3;">tutto</span>
<span style="left:398.88px;top:203.99px;font:400 19.5px/1 'Liberation Sans',sans-serif;letter-spacing:-0.113px;color:#b5b4b3;">Query</span>
<span style="left:460.52px;top:203.99px;font:400 19.5px/1 'Liberation Sans',sans-serif;letter-spacing:0.172px;color:#b5b4b3;">Collegamenti alle cartelle di</span>
<span style="left:554.19px;top:230.19px;font:400 19.5px/1 'Liberation Sans',sans-serif;letter-spacing:0.357px;color:#b5b4b3;">lavoro</span>
<span style="left:389.03px;top:264.80px;font:400 16.3px/1 'Liberation Sans',sans-serif;letter-spacing:-0.032px;color:#b5b4b3;">Query e connessioni</span>
<span style="left:766.15px;top:210.57px;font:400 22.6px/1 'Liberation Sans',sans-serif;letter-spacing:0.263px;color:#b5b4b3;">Azioni</span>
<span style="left:771.44px;top:264.80px;font:400 16.3px/1 'Liberation Sans',sans-serif;letter-spacing:0.349px;color:#b5b4b3;">Tipi di dati</span>
<span style="left:920.99px;top:164.23px;font:400 16.5px/1 'Liberation Sans',sans-serif;color:#acc8dc;">A</span>
<span style="left:921.45px;top:179.03px;font:400 16.5px/1 'Liberation Sans',sans-serif;color:#b9b8b7;">Z</span>
<span style="left:921.45px;top:204.03px;font:400 16.5px/1 'Liberation Sans',sans-serif;color:#b9b8b7;">Z</span>
<span style="left:920.99px;top:218.83px;font:400 16.5px/1 'Liberation Sans',sans-serif;color:#acc8dc;">A</span>
<span style="left:953.38px;top:171.39px;font:400 19.5px/1 'Liberation Sans',sans-serif;letter-spacing:0.105px;color:#b5b4b3;">Ordinamento crescente</span>
<span style="left:953.38px;top:211.59px;font:400 19.5px/1 'Liberation Sans',sans-serif;letter-spacing:0.109px;color:#b5b4b3;">Ordinamento decrescente</span>
<span style="left:1238.98px;top:152.18px;font:400 16.8px/1 'Liberation Sans',sans-serif;color:#b9b8b7;">Z</span>
<span style="left:1261.17px;top:152.18px;font:400 16.8px/1 'Liberation Sans',sans-serif;color:#acc8dc;">A</span>
<span style="left:1238.57px;top:169.28px;font:400 16.8px/1 'Liberation Sans',sans-serif;color:#acc8dc;">A</span>
<span style="left:1261.48px;top:169.28px;font:400 16.8px/1 'Liberation Sans',sans-serif;color:#b9b8b7;">Z</span>
<span style="left:1196.78px;top:198.99px;font:400 19.5px/1 'Liberation Sans',sans-serif;letter-spacing:0.448px;color:#b5b4b3;">Ordinamento</span>
<span style="left:1192.05px;top:224.59px;font:400 19.5px/1 'Liberation Sans',sans-serif;letter-spacing:0.062px;color:#b5b4b3;">personalizzato</span>
<span style="left:1346.00px;top:198.99px;font:400 19.5px/1 'Liberation Sans',sans-serif;letter-spacing:0.332px;color:#b5b4b3;">Filtro</span>
<span style="left:1447.43px;top:146.29px;font:400 19.5px/1 'Liberation Sans',sans-serif;letter-spacing:-0.633px;color:#b5b4b3;">Cancella</span>
<span style="left:1446.80px;top:186.19px;font:400 19.5px/1 'Liberation Sans',sans-serif;letter-spacing:-0.230px;color:#b5b4b3;">Riapplica</span>
<span style="left:1171.83px;top:264.80px;font:400 16.3px/1 'Liberation Sans',sans-serif;letter-spacing:0.158px;color:#b5b4b3;">Ordina e filtra</span>
<span style="left:1563.37px;top:203.99px;font:400 19.5px/1 'Liberation Sans',sans-serif;letter-spacing:-0.146px;color:#b5b4b3;">Testo in</span>
<span style="left:1559.33px;top:230.19px;font:400 19.5px/1 'Liberation Sans',sans-serif;letter-spacing:0.116px;color:#b5b4b3;">Colonne</span>
<span style="left:1650.36px;top:203.99px;font:400 19.5px/1 'Liberation Sans',sans-serif;letter-spacing:0.131px;color:#b5b4b3;">Anteprima</span>
<span style="left:1638.07px;top:230.19px;font:400 19.5px/1 'Liberation Sans',sans-serif;letter-spacing:0.291px;color:#b5b4b3;">suggerimenti</span>
<span style="left:1759.30px;top:203.99px;font:400 19.5px/1 'Liberation Sans',sans-serif;letter-spacing:0.195px;color:#b5b4b3;">Rimuovi</span>
<span style="left:1758.28px;top:230.19px;font:400 19.5px/1 'Liberation Sans',sans-serif;letter-spacing:0.385px;color:#b5b4b3;">duplicati</span>
<span style="left:1837.62px;top:203.99px;font:400 19.5px/1 'Liberation Sans',sans-serif;letter-spacing:0.093px;color:#b5b4b3;">Convalida dei</span>
<span style="left:1880.48px;top:230.19px;font:400 19.5px/1 'Liberation Sans',sans-serif;letter-spacing:0.759px;color:#b5b4b3;">dati</span>
<span style="left:1706.17px;top:264.80px;font:400 16.3px/1 'Liberation Sans',sans-serif;letter-spacing:0.252px;color:#b5b4b3;">Strumenti dati</span>
<span style="left:1988.90px;top:205.79px;font:400 19.5px/1 'Liberation Sans',sans-serif;letter-spacing:0.023px;color:#b5b4b3;">Raggruppa</span>
<div style="left:2080px;top:190px;width:39px;height:50px;overflow:hidden;"><span style="position:absolute;left:12.8px;top:16px;font:400 19.5px/1 'Liberation Sans',sans-serif;color:#b5b4b3;letter-spacing:-0.4px">Separa</span></div>
<span style="left:2038.97px;top:264.80px;font:400 16.3px/1 'Liberation Sans',sans-serif;letter-spacing:0.046px;color:#b5b4b3;">Struttura</span>
<span style="left:7.26px;top:302.79px;font:400 18.8px/1 'Liberation Sans',sans-serif;color:#787878;">A1</span>
<span style="left:326.73px;top:297.18px;font:italic 400 24.5px/1 'Liberation Serif',serif;color:#777;">f</span>
<span style="left:334.60px;top:300.10px;font:italic 400 21px/1 'Liberation Serif',serif;color:#777;">x</span>
<span style="left:368.60px;top:299.06px;font:400 20.6px/1 'Liberation Sans',sans-serif;letter-spacing:0.162px;color:#7a7a7a;">INFORMAZIONI IMPIEGATI</span>
<span style="left:164.98px;top:348.46px;font:700 20.6px/1 'Liberation Sans',sans-serif;color:#6b9f85;">A</span>
<span style="left:454.85px;top:348.46px;font:700 20.6px/1 'Liberation Sans',sans-serif;color:#6b9f85;">B</span>
<span style="left:769.92px;top:348.46px;font:700 20.6px/1 'Liberation Sans',sans-serif;color:#6b9f85;">C</span>
<span style="left:1063.31px;top:348.46px;font:700 20.6px/1 'Liberation Sans',sans-serif;color:#6b9f85;">D</span>
<span style="left:1265.51px;top:348.46px;font:400 20.6px/1 'Liberation Sans',sans-serif;color:#8a8a8a;">E</span>
<span style="left:1371.67px;top:348.46px;font:400 20.6px/1 'Liberation Sans',sans-serif;color:#8a8a8a;">F</span>
<span style="left:1476.23px;top:348.46px;font:400 20.6px/1 'Liberation Sans',sans-serif;color:#8a8a8a;">G</span>
<span style="left:1582.15px;top:348.46px;font:400 20.6px/1 'Liberation Sans',sans-serif;color:#8a8a8a;">H</span>
<span style="left:1692.33px;top:348.46px;font:400 20.6px/1 'Liberation Sans',sans-serif;color:#8a8a8a;">I</span>
<span style="left:1796.26px;top:348.46px;font:400 20.6px/1 'Liberation Sans',sans-serif;color:#8a8a8a;">J</span>
<span style="left:1898.79px;top:348.46px;font:400 20.6px/1 'Liberation Sans',sans-serif;color:#8a8a8a;">K</span>
<span style="left:2005.76px;top:348.46px;font:400 20.6px/1 'Liberation Sans',sans-serif;color:#8a8a8a;">L</span>
<div style="left:2090px;top:344px;width:37.5px;height:28px;overflow:hidden;"><span style="position:absolute;left:18.5px;top:4.1px;font:400 20.6px/1 'Liberation Sans',sans-serif;color:#8a8a8a">M</span></div>
<span style="left:14.21px;top:428.96px;font:700 20.6px/1 'Liberation Sans',sans-serif;color:#6b9f85;">1</span>
<span style="left:14.67px;top:482.36px;font:400 20.6px/1 'Liberation Sans',sans-serif;color:#8a8a8a;">2</span>
<span style="left:14.72px;top:515.16px;font:400 20.6px/1 'Liberation Sans',sans-serif;color:#8a8a8a;">3</span>
<span style="left:14.74px;top:548.16px;font:400 20.6px/1 'Liberation Sans',sans-serif;color:#8a8a8a;">4</span>
<span style="left:14.68px;top:581.16px;font:400 20.6px/1 'Liberation Sans',sans-serif;color:#8a8a8a;">5</span>
<span style="left:14.60px;top:614.16px;font:400 20.6px/1 'Liberation Sans',sans-serif;color:#8a8a8a;">6</span>
<span style="left:14.66px;top:647.16px;font:400 20.6px/1 'Liberation Sans',sans-serif;color:#8a8a8a;">7</span>
<span style="left:14.67px;top:680.16px;font:400 20.6px/1 'Liberation Sans',sans-serif;color:#8a8a8a;">8</span>
<span style="left:14.68px;top:713.16px;font:400 20.6px/1 'Liberation Sans',sans-serif;color:#8a8a8a;">9</span>
<span style="left:8.55px;top:746.16px;font:400 20.6px/1 'Liberation Sans',sans-serif;color:#8a8a8a;">10</span>
<span style="left:9.42px;top:779.16px;font:400 20.6px/1 'Liberation Sans',sans-serif;color:#8a8a8a;">11</span>
<span style="left:8.67px;top:812.16px;font:400 20.6px/1 'Liberation Sans',sans-serif;color:#8a8a8a;">12</span>
<span style="left:8.60px;top:845.16px;font:400 20.6px/1 'Liberation Sans',sans-serif;color:#8a8a8a;">13</span>
<span style="left:8.46px;top:878.16px;font:400 20.6px/1 'Liberation Sans',sans-serif;color:#8a8a8a;">14</span>
<span style="left:8.58px;top:911.16px;font:400 20.6px/1 'Liberation Sans',sans-serif;color:#8a8a8a;">15</span>
<span style="left:8.60px;top:944.16px;font:400 20.6px/1 'Liberation Sans',sans-serif;color:#8a8a8a;">16</span>
<span style="left:8.67px;top:977.16px;font:400 20.6px/1 'Liberation Sans',sans-serif;color:#8a8a8a;">17</span>
<span style="left:8.60px;top:1010.16px;font:400 20.6px/1 'Liberation Sans',sans-serif;color:#8a8a8a;">18</span>
<span style="left:8.64px;top:1043.16px;font:400 20.6px/1 'Liberation Sans',sans-serif;color:#8a8a8a;">19</span>
<span style="left:8.82px;top:1076.16px;font:400 20.6px/1 'Liberation Sans',sans-serif;color:#8a8a8a;">20</span>
<span style="left:8.92px;top:1109.16px;font:400 20.6px/1 'Liberation Sans',sans-serif;color:#8a8a8a;">21</span>
<span style="left:459.75px;top:401.17px;font:700 31.1px/1 'Liberation Sans',sans-serif;letter-spacing:-1.840px;color:#e6e8ec;">INFORMAZIONI IMPIEGATI</span>
<span style="left:138.96px;top:472.48px;font:700 23.3px/1 'Liberation Sans',sans-serif;letter-spacing:-0.420px;color:#e6e8ec;">NOME</span>
<span style="left:362.76px;top:472.48px;font:700 23.3px/1 'Liberation Sans',sans-serif;letter-spacing:-0.878px;color:#e6e8ec;">DATA ASSUNZIONE</span>
<span style="left:757.76px;top:472.48px;font:700 23.3px/1 'Liberation Sans',sans-serif;letter-spacing:-2.481px;color:#e6e8ec;">ETÀ</span>
<span style="left:1025.65px;top:472.48px;font:700 23.3px/1 'Liberation Sans',sans-serif;letter-spacing:-1.703px;color:#e6e8ec;">SALARIO</span>
<span style="left:56.76px;top:515.58px;font:400 21.4px/1 'Liberation Sans',sans-serif;letter-spacing:0.088px;color:#686868;">Alessandro</span>
<span style="left:511.53px;top:515.58px;font:400 21.4px/1 'Liberation Sans',sans-serif;letter-spacing:1.137px;color:#686868;">21/09/2014</span>
<span style="left:56.76px;top:548.58px;font:400 21.4px/1 'Liberation Sans',sans-serif;letter-spacing:0.248px;color:#686868;">Arianna</span>
<span style="left:511.77px;top:548.58px;font:400 21.4px/1 'Liberation Sans',sans-serif;letter-spacing:1.161px;color:#686868;">09/07/2017</span>
<span style="left:55.75px;top:581.58px;font:400 21.4px/1 'Liberation Sans',sans-serif;letter-spacing:0.502px;color:#686868;">Beatrice</span>
<span style="left:511.53px;top:581.58px;font:400 21.4px/1 'Liberation Sans',sans-serif;letter-spacing:1.170px;color:#686868;">26/04/2016</span>
<span style="left:56.43px;top:614.58px;font:400 21.4px/1 'Liberation Sans',sans-serif;letter-spacing:0.217px;color:#686868;">Claudio</span>
<span style="left:511.79px;top:614.58px;font:400 21.4px/1 'Liberation Sans',sans-serif;letter-spacing:1.158px;color:#686868;">30/06/2007</span>
<span style="left:55.75px;top:647.58px;font:400 21.4px/1 'Liberation Sans',sans-serif;letter-spacing:-0.155px;color:#686868;">Francesco</span>
<span style="left:510.97px;top:647.58px;font:400 21.4px/1 'Liberation Sans',sans-serif;letter-spacing:1.227px;color:#686868;">15/03/2015</span>
<span style="left:56.43px;top:680.58px;font:400 21.4px/1 'Liberation Sans',sans-serif;letter-spacing:0.324px;color:#686868;">Giacomo</span>
<span style="left:510.97px;top:680.58px;font:400 21.4px/1 'Liberation Sans',sans-serif;letter-spacing:1.407px;color:#686868;">11/12/2008</span>
<span style="left:55.75px;top:713.58px;font:400 21.4px/1 'Liberation Sans',sans-serif;letter-spacing:0.397px;color:#686868;">Luigi</span>
<span style="left:511.77px;top:713.58px;font:400 21.4px/1 'Liberation Sans',sans-serif;letter-spacing:1.153px;color:#686868;">01/05/2019</span>
<span style="left:55.75px;top:746.58px;font:400 21.4px/1 'Liberation Sans',sans-serif;letter-spacing:0.118px;color:#686868;">Riccardo</span>
<span style="left:510.97px;top:746.58px;font:400 21.4px/1 'Liberation Sans',sans-serif;letter-spacing:1.227px;color:#686868;">18/10/2005</span>
<span style="left:894.69px;top:746.58px;font:400 21.4px/1 'Liberation Sans',sans-serif;letter-spacing:0.940px;color:#686868;">33</span>
<span style="left:1100.19px;top:746.58px;font:400 21.4px/1 'Liberation Sans',sans-serif;letter-spacing:0.260px;color:#686868;">35.000,00 €</span>
<span style="left:55.84px;top:779.58px;font:400 21.4px/1 'Liberation Sans',sans-serif;letter-spacing:-1.081px;color:#686868;">Sara</span>
<span style="left:510.97px;top:779.58px;font:400 21.4px/1 'Liberation Sans',sans-serif;letter-spacing:1.220px;color:#686868;">14/02/2010</span>
<span style="left:894.69px;top:779.58px;font:400 21.4px/1 'Liberation Sans',sans-serif;letter-spacing:1.047px;color:#686868;">31</span>
<span style="left:1100.19px;top:779.58px;font:400 21.4px/1 'Liberation Sans',sans-serif;letter-spacing:0.260px;color:#686868;">33.000,00 €</span>
<span style="left:55.84px;top:812.58px;font:400 21.4px/1 'Liberation Sans',sans-serif;letter-spacing:0.043px;color:#686868;">Simona</span>
<span style="left:511.77px;top:812.58px;font:400 21.4px/1 'Liberation Sans',sans-serif;letter-spacing:1.307px;color:#686868;">05/11/2020</span>
<span style="left:894.43px;top:812.58px;font:400 21.4px/1 'Liberation Sans',sans-serif;letter-spacing:1.346px;color:#686868;">27</span>
<span style="left:1100.53px;top:812.58px;font:400 21.4px/1 'Liberation Sans',sans-serif;letter-spacing:0.226px;color:#686868;">42.000,00 €</span>
<span style="left:55.84px;top:845.58px;font:400 21.4px/1 'Liberation Sans',sans-serif;letter-spacing:-0.230px;color:#686868;">Sofia</span>
<span style="left:511.77px;top:845.58px;font:400 21.4px/1 'Liberation Sans',sans-serif;letter-spacing:1.156px;color:#686868;">07/08/2001</span>
<span style="left:894.43px;top:845.58px;font:400 21.4px/1 'Liberation Sans',sans-serif;letter-spacing:1.197px;color:#686868;">28</span>
<span style="left:1099.93px;top:845.58px;font:400 21.4px/1 'Liberation Sans',sans-serif;letter-spacing:0.286px;color:#686868;">26.000,00 €</span>
<span style="left:168.90px;top:1183.92px;font:400 21px/1 'Liberation Sans',sans-serif;letter-spacing:0.834px;color:#7a7a7a;-webkit-text-stroke:0.84px #7a7a7a;">Foglio1</span>
<span style="left:13.90px;top:1234.51px;font:400 18.3px/1 'Liberation Sans',sans-serif;letter-spacing:0.908px;color:#828282;">Modalità di calcolo: Automatico</span>
<span style="left:319.98px;top:1234.51px;font:400 18.3px/1 'Liberation Sans',sans-serif;letter-spacing:0.577px;color:#b9b9b9;">Statistiche cartella di lavoro</span>
<span style="left:1718.62px;top:1234.51px;font:400 18.3px/1 'Liberation Sans',sans-serif;letter-spacing:0.733px;color:#bcbcbc;">Invia feedback a Microsoft</span>
<span style="left:2047.91px;top:1234.51px;font:400 18.3px/1 'Liberation Sans',sans-serif;letter-spacing:0.423px;color:#bcbcbc;">100%</span>
</div>
<div id="dlg">
<div style="left:788.5px;top:509px;width:566.5px;height:236.5px;background:#ffffff;border:1.4px solid #1e7c47;border-radius:11px;box-shadow:0 22px 56px rgba(0,0,0,.5),0 8px 16px rgba(0,0,0,.4);"></div>
<div style="left:799.3px;top:602.5px;width:550.4px;height:62px;background:transparent;border:4.8px solid #fe0000;"></div>
<div style="left:812px;top:614.1px;width:293.8px;height:36.6px;background:#ffffff;border:1.2px solid #dcdcdc;border-radius:2px;"></div>
<div style="left:1111.3px;top:616.3px;width:219.6px;height:34.4px;background:#ffffff;border:1.4px solid #767676;"></div>
<div style="left:1066.8px;top:671.4px;width:137.8px;height:61.4px;background:transparent;border:4.8px solid #fe0000;"></div>
<div style="left:1076.9px;top:684.3px;width:119.2px;height:37.4px;background:#ffffff;border:1.3px solid #8a8a8a;"></div>
<div style="left:1212px;top:684.3px;width:118.9px;height:37.4px;background:#ffffff;border:1.3px solid #8a8a8a;"></div>
<svg width="2152" height="1257" viewBox="0 0 2152 1257" fill="none">
<path d="M1311,534.4 L1324.6,547.2 M1324.6,534.4 L1311,547.2" stroke="#555" fill="none" stroke-width="1.7" />
<path d="M1083.2,628.8 L1090,635.4 L1096.8,628.8" stroke="#111" fill="none" stroke-width="2" />
</svg>
<span style="left:811.60px;top:533.65px;font:400 24.4px/1 'Liberation Sans',sans-serif;letter-spacing:-0.123px;color:#333333;">Filtro personalizzato</span>
<span style="left:812.04px;top:576.92px;font:400 19px/1 'Liberation Sans',sans-serif;letter-spacing:0.500px;color:#444444;">Mostra elementi in cui:</span>
<span style="left:1016.87px;top:576.92px;font:700 19px/1 'Liberation Sans',sans-serif;letter-spacing:-0.296px;color:#3a3a3a;">SALARIO</span>
<span style="left:818.38px;top:621.08px;font:400 22px/1 'Liberation Sans',sans-serif;letter-spacing:0.149px;color:#000000;">è maggiore di</span>
<span style="left:1112.76px;top:621.08px;font:400 22px/1 'Liberation Sans',sans-serif;letter-spacing:-0.104px;color:#000000;">30.000</span>
<span style="left:1123.34px;top:695.22px;font:400 18.4px/1 'Liberation Sans',sans-serif;letter-spacing:-0.511px;color:#333333;">OK</span>
<span style="left:1239.76px;top:694.22px;font:400 19px/1 'Liberation Sans',sans-serif;letter-spacing:0.172px;color:#333333;">Annulla</span>
</div>
</body></html>
